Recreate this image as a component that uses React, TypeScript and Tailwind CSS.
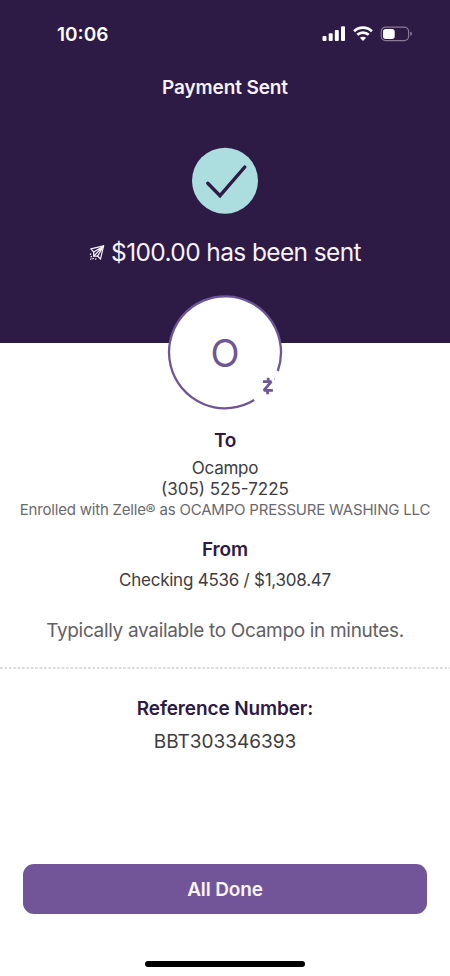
import type { ReactNode } from "react";
import clsx from "clsx";

const payment = {
  amount: "$100.00",
  recipient: "Ocampo",
  phone: "(305) 525-7225",
  enrolledAs: "OCAMPO PRESSURE WASHING LLC",
  account: "Checking 4536 / $1,308.47",
  reference: "BBT303346393",
};

function StatusBar() {
  return (
    <div className="flex h-[68px] items-center justify-between pl-[57px] pr-[37px] text-white">
      <span className="text-[19px] font-semibold leading-none">10:06</span>
      <div className="flex items-center">
        <svg width="24" height="16" viewBox="0 0 24 16" fill="currentColor">
          <rect x="0.5" y="10" width="4" height="5" rx="1" />
          <rect x="6.7" y="7.2" width="4" height="7.8" rx="1" />
          <rect x="12.8" y="4" width="4" height="11" rx="1" />
          <rect x="19" y="0.3" width="4" height="14.7" rx="1" />
        </svg>
        <svg
          className="ml-[7px]"
          width="20"
          height="16"
          viewBox="0 0 20 16"
          fill="none"
          stroke="currentColor"
          strokeWidth="2.7"
        >
          <path d="M1.1 5.3C6 .5 14 .5 18.9 5.3" />
          <path d="M4.3 8.8c3.2-3 8.2-3 11.4 0" />
          <path
            d="M10 15 6.9 11.8c1.8-1.5 4.4-1.5 6.2 0Z"
            fill="currentColor"
            stroke="none"
          />
        </svg>
        <svg className="ml-[7px]" width="33" height="16" viewBox="0 0 33 16">
          <rect
            x="1.2"
            y="1.1"
            width="27.4"
            height="13.6"
            rx="4.4"
            fill="none"
            stroke="#897b98"
            strokeWidth="1.2"
          />
          <rect x="3" y="2.9" width="11.7" height="10" rx="2.7" fill="#fff" />
          <path d="M30.2 5.8c2.4.7 2.4 3.5 0 4.2Z" fill="#897b98" />
        </svg>
      </div>
    </div>
  );
}

function RocketIcon() {
  return (
    <svg
      width="16"
      height="16"
      viewBox="0 0 16 16"
      fill="none"
      stroke="currentColor"
      strokeWidth="1.2"
      strokeLinecap="round"
      strokeLinejoin="round"
    >
      <path d="M14.6 0.9 1.8 3.8l2.9 3.3v4h3.9l2.9 2.9L14.6 0.9Z" />
      <path d="M14.6 0.9 4.7 7.1M14.6 0.9 8.6 11.1M14.6 0.9 4.9 11" />
      <path d="M1.8 8.9l-.4.4M2.6 11.3l-.6.6M1.6 14.2l.4-.4M4.4 13.3l-.6.6M6.9 13.8l-.4.4" />
    </svg>
  );
}

function Avatar({ initial }: { initial: string }) {
  return (
    <div className="relative flex h-[116px] w-[116px] items-center justify-center">
      <svg
        className="absolute inset-0"
        width="116"
        height="116"
        viewBox="0 0 116 116"
        fill="none"
      >
        <circle cx="58" cy="58.3" r="56" fill="#fff" />
        <path
          d="M110.8 77A56 56 0 1 0 87.2 106.1"
          stroke="#6d5596"
          strokeWidth="2.3"
        />
        {/* Zelle mark */}
        <path
          d="M95.9 87.6h8.4l-7.4 8.8h9M101.2 83.8v3.8M100.6 96.4v3.9"
          stroke="#70579b"
          strokeWidth="2.8"
          strokeLinejoin="bevel"
        />
        <circle cx="107.6" cy="85" r="0.8" fill="#a99bc2" />
      </svg>
      <span className="relative pt-px text-[38px] leading-none text-[#6d5596]">
        {initial}
      </span>
    </div>
  );
}

function Line({ className, children }: { className?: string; children: ReactNode }) {
  return (
    <p className={clsx("flex items-center justify-center whitespace-nowrap", className)}>
      {children}
    </p>
  );
}

export default function App() {
  return (
    <main className="flex h-[976px] w-[450px] flex-col overflow-hidden bg-white font-['Inter',sans-serif] text-[#3e3c40]">
      <header className="flex h-[343px] shrink-0 flex-col bg-[#2d1a45] text-[#f7f1fa]">
        <StatusBar />
        <h1 className="flex h-10 items-center justify-center text-[19px] font-semibold tracking-[-0.12px]">
          Payment Sent
        </h1>
        <div className="mt-[39px] flex justify-center">
          <svg width="68" height="68" viewBox="0 0 68 68" fill="none">
            <circle cx="34" cy="33.7" r="33" fill="#addedf" />
            <path
              d="M16.8 36.3 29 48.7 53.8 20"
              stroke="#2d1a45"
              strokeWidth="3.4"
              strokeLinecap="round"
            />
          </svg>
        </div>
        <div className="mt-[17px] flex h-[41px] items-center justify-center gap-[6px]">
          <RocketIcon />
          <span className="text-[24.5px] leading-none tracking-[-0.62px]">
            {payment.amount} has been sent
          </span>
        </div>
      </header>

      <section className="-mt-[49px] flex flex-col items-center">
        <Avatar initial={payment.recipient.charAt(0)} />
        <Line className="mt-[19px] h-6 text-[19px] font-semibold tracking-[-0.3px] text-[#2d1a45]">
          To
        </Line>
        <Line className="mt-[6px] h-5 text-[17px] tracking-[-0.25px]">{payment.recipient}</Line>
        <Line className="h-[21px] text-[17px]">{payment.phone}</Line>
        <Line className="h-[21px] text-[15px] tracking-[-0.2px] text-[#6b696d]">
          Enrolled with Zelle® as {payment.enrolledAs}
        </Line>
        <Line className="mt-[17px] h-6 text-[19px] font-semibold tracking-[-0.1px] text-[#2d1a45]">
          From
        </Line>
        <Line className="mt-[7px] h-6 text-[17px] tracking-[-0.24px]">{payment.account}</Line>
        <Line className="mt-[25px] h-[26px] text-[19px] tracking-[-0.32px] text-[#626064]">
          Typically available to {payment.recipient} in minutes.
        </Line>
      </section>

      <svg className="mt-[23px] shrink-0" width="450" height="2" viewBox="0 0 450 2">
        <path d="M0 1H450" stroke="#d2d0d4" strokeWidth="1.3" strokeDasharray="2.7 1.7" />
      </svg>

      <section className="mt-[28px] flex flex-col items-center">
        <Line className="h-6 text-[19px] font-semibold tracking-[-0.12px] text-[#2d1a45]">
          Reference Number:
        </Line>
        <Line className="mt-[9px] h-6 text-[19px]">{payment.reference}</Line>
      </section>

      <footer className="mt-auto flex flex-col items-center px-[23px] pb-[9px]">
        <button className="h-[50px] w-full rounded-[11px] bg-[#725599] pt-[2px] text-[19px] font-semibold tracking-[-0.12px] text-[#f9f4fc]">
          All Done
        </button>
        <div className="mt-[47px] h-[6px] w-[160px] rounded-full bg-black" />
      </footer>
    </main>
  );
}
